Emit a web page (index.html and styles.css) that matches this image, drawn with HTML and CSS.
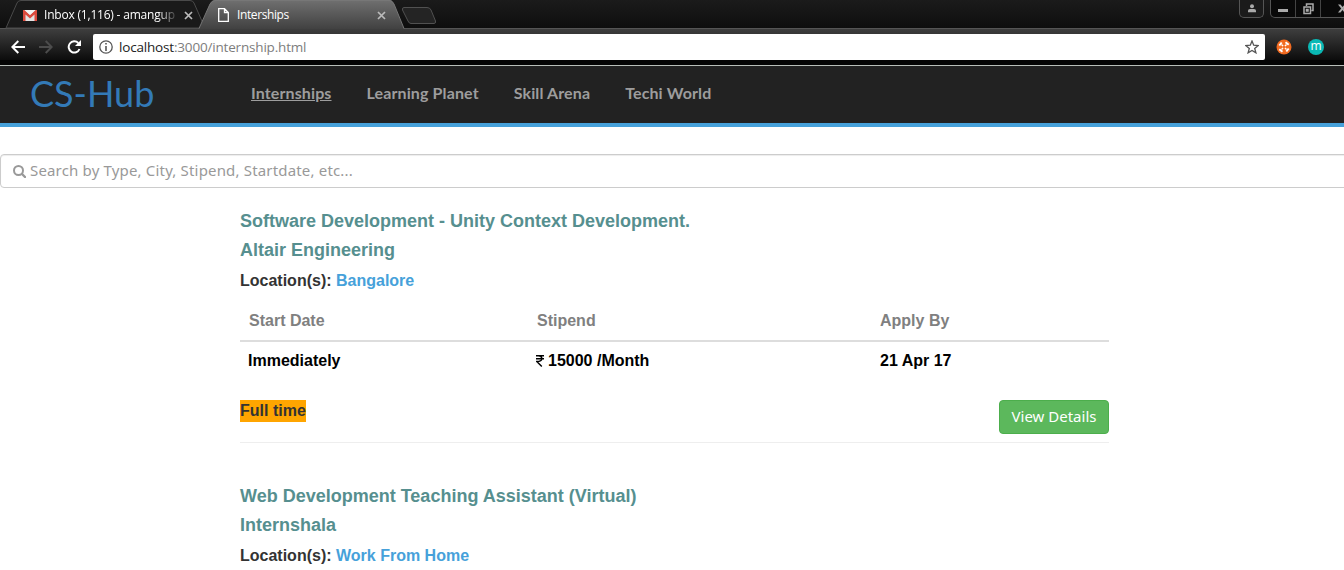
FILE: index.html
```html
<!DOCTYPE html>
<html lang="en">
<head>
<meta charset="utf-8">
<title>Interships</title>
<link rel="stylesheet" href="styles.css">
</head>
<body>
<header class="browser">
  <div class="tabstrip">
    <svg class="tab-shapes" width="450" height="29" viewBox="0 0 450 29">
      <defs>
        <linearGradient id="active" x1="0" y1="0" x2="0" y2="1"><stop offset="0" stop-color="#707070"/><stop offset="1" stop-color="#414141"/></linearGradient>
      </defs>
      <path d="M6 28L17 3Q18 .5 21 .5H190Q193 .5 194 3L205 28Z" fill="#1a1a1a" stroke="#4a4a4a"/>
      <path d="M199 29L210 4Q212 0 215 0H390Q392 0 394 4L404 29Z" fill="url(#active)"/>
      <path d="M199 28.5L210 4Q212 .5 215 .5H390Q392 .5 394 4L404 28.5" fill="none" stroke="#777"/>
      <path d="M404 7.500H427Q430 7.500 431 10L435.500 21Q436 23.500 434 23.500H411Q409 23.500 408 21L402.500 10Q402 7.500 404 7.500Z" fill="#242424" stroke="#515151"/>
    </svg>
    <div class="tab tab-first">
      <svg width="14" height="11" viewBox="0 0 14 11"><path d="M0 0H14V11H0Z" fill="#e4e4e4"/><path d="M0 11V0H1.500L7 5L12.500 0H14V11H11.500V4.500L7 8.500L2.500 4.500V11Z" fill="#dd4b3e"/><path d="M1.500 0H12.500L7 5Z" fill="#f5f5f5"/></svg>
      <span class="tab-title fade">Inbox (1,116) - amangup</span>
      <svg class="close" width="9" height="9" viewBox="0 0 9 9"><path d="M1 1L8 8M8 1L1 8"/></svg>
    </div>
    <div class="tab tab-active">
      <svg width="11" height="14" viewBox="0 0 11 14"><path d="M.7 .7H6.500L10.300 4.500V13.300H.7ZM6.500 .7V4.500H10.300" fill="none" stroke="#fff" stroke-width="1.300"/></svg>
      <span class="tab-title">Interships</span>
      <svg class="close" width="9" height="9" viewBox="0 0 9 9"><path d="M1 1L8 8M8 1L1 8"/></svg>
    </div>
    <div class="window-controls">
      <span class="control profile"><svg width="10" height="9" viewBox="0 0 10 9"><circle cx="5" cy="2.200" r="2" fill="#aaa"/><path d="M1 8.300V6.500Q1 5 3 5H7Q9 5 9 6.500V8.300Z" fill="#aaa"/></svg></span>
      <span class="control group">
        <span class="cell"><svg width="10" height="12" viewBox="0 0 10 12"><path d="M0 6H10V9H0Z" fill="#aaa"/></svg></span>
        <span class="cell"><svg width="11" height="12" viewBox="0 0 11 12"><path d="M3.500 3V1H10V7.500H8.500M1 4H7.500V10.500H1ZM3.500 6.500H5V8H3.500Z" fill="none" stroke="#aaa" stroke-width="1.500"/></svg></span>
        <span class="cell wide"><svg width="9" height="9" viewBox="0 0 9 9"><path d="M0 .5H2.500L4.500 3L6.500 .5H9L5.800 4.500L9 8.500H6.500L4.500 6L2.500 8.500H0L3.200 4.500Z" fill="#aaa"/></svg></span>
      </span>
    </div>
  </div>
  <div class="toolbar">
    <div class="nav-icons">
      <svg width="14" height="14" viewBox="0 0 14 14"><path d="M14 7H1.500M7.300 1L1.300 7L7.300 13" fill="none" stroke="#fff" stroke-width="2"/></svg>
      <svg width="14" height="14" viewBox="0 0 14 14"><path d="M0 7H12.500M6.700 1L12.700 7L6.700 13" fill="none" stroke="#4c4c4c" stroke-width="2"/></svg>
      <svg width="15" height="14" viewBox="0 0 15 14"><path d="M12.500 9A5.600 5.600 0 1 1 11.300 3" fill="none" stroke="#fff" stroke-width="2"/><path d="M14 0V6H8Z" fill="#fff"/></svg>
    </div>
    <div class="omnibox">
      <svg width="14" height="14" viewBox="0 0 14 14"><circle cx="7" cy="7" r="6.200" fill="none" stroke="#555" stroke-width="1.300"/><path d="M6.200 3H7.800V4.600H6.200ZM6.200 6H7.800V11H6.200Z" fill="#555"/></svg>
      <span class="url"><b>localhost</b>:3000/internship.html</span>
      <svg class="star" width="14" height="14" viewBox="0 0 14 14"><path d="M7 1L8.700 5.200L13.200 5.500L9.700 8.400L10.900 12.800L7 10.400L3.100 12.800L4.300 8.400L.8 5.500L5.300 5.200Z" fill="none" stroke="#555" stroke-width="1.300"/></svg>
    </div>
    <svg class="ext" width="16" height="16" viewBox="0 0 16 16"><circle cx="8" cy="8" r="7.500" fill="#f26b21"/><path d="M5.500 5.500L10.500 10.500M10.500 5.500L5.500 10.500" stroke="#fff" stroke-width="1.400"/><path d="M3.300 6.500L5.700 3.500M9.500 3.300L12.700 5.700M12.700 9.500L10.300 12.500M6.500 12.700L3.300 10.300" stroke="#fff" stroke-width="2"/><circle cx="8" cy="8" r="1.500" fill="#f26b21"/></svg>
    <span class="ext-m">m</span>
  </div>
</header>
<nav class="navbar">
  <a class="brand">CS-Hub</a>
  <a class="link current">Internships</a>
  <a class="link">Learning Planet</a>
  <a class="link">Skill Arena</a>
  <a class="link">Techi World</a>
</nav>
<div class="search">
  <svg width="13" height="13" viewBox="0 0 13 13"><circle cx="5.500" cy="5.500" r="4.500" fill="none" stroke="#999" stroke-width="2"/><path d="M9 9L12 12" stroke="#999" stroke-width="2.400" stroke-linecap="round"/></svg>
  <span class="placeholder">Search by Type, City, Stipend, Startdate, etc...</span>
</div>
<main class="listing">
  <section class="job">
    <h4 class="title">Software Development - Unity Context Development.</h4>
    <h4 class="title company">Altair Engineering</h4>
    <p class="location">Location(s): <a>Bangalore</a></p>
    <div class="row head"><span>Start Date</span><span>Stipend</span><span>Apply By</span></div>
    <div class="row values"><span>Immediately</span><span class="pay"><svg width="8" height="12" viewBox="0 0 8 12"><path d="M0 .8H8M0 3.800H8M.5 .8H2.500Q5.800 .8 5.800 3.800Q5.800 6.500 .8 6.500L5.800 11.500" fill="none" stroke="#000" stroke-width="1.400"/></svg>15000 /Month</span><span>21 Apr 17</span></div>
    <div class="footer"><span class="badge">Full time</span><button class="details">View Details</button></div>
  </section>
  <section class="job">
    <h4 class="title">Web Development Teaching Assistant (Virtual)</h4>
    <h4 class="title company">Internshala</h4>
    <p class="location">Location(s): <a>Work From Home</a></p>
  </section>
</main>
</body>
</html>
```
FILE: styles.css
```css
* { box-sizing: border-box; }
html, body { margin: 0; height: 570px; overflow: hidden; background: #fff; }
body { font-family: "Liberation Sans", Arial, sans-serif; color: #333; }
svg { display: block; flex: none; }

.browser { height: 66px; background: #050505; border-bottom: 1px solid #b9bfba; }
.tabstrip { position: relative; display: flex; height: 28px; background: linear-gradient(#1b1b1b, #0e0e0e); }
.tab-shapes { position: absolute; left: 0; top: 0; }
.tab { position: relative; display: flex; align-items: center; height: 30px; color: #fff; font: 12px "Open Sans", sans-serif; }
.tab-first { width: 205px; padding-left: 23px; gap: 7px; }
.tab-active { width: 200px; padding-left: 13px; gap: 8px; }
.tab-title { flex: none; width: 135px; white-space: nowrap; letter-spacing: -.4px; line-height: 16px; padding-bottom: 1px; }
.tab-first .tab-title { letter-spacing: -.2px; }
.tab-active .tab-title { width: 132px; }
.fade { -webkit-mask-image: linear-gradient(90deg, #000 84%, transparent); mask-image: linear-gradient(90deg, #000 84%, transparent); }
.close path { stroke: #bbb; stroke-width: 1.7; }
.tab-active .close { margin-left: 0; }
.tab-first .close { margin-left: -2px; }
.window-controls { display: flex; gap: 6px; margin-left: auto; margin-right: -21px; }
.control { display: flex; height: 18px; border: 1px solid #555; border-top: 0; border-radius: 0 0 5px 5px; background: #090909; }
.profile { width: 25px; justify-content: center; padding-top: 4px; background: #1b1b1b; }
.cell { display: flex; width: 25px; justify-content: center; padding-top: 3px; border-right: 1px solid #444; }
.cell.wide { width: 43px; padding-top: 4px; border: 0; }

.toolbar { display: flex; align-items: center; height: 32px; padding-left: 11px; background: linear-gradient(#3e3e3e, #0c0c0c); border-top: 1px solid #555; }
.nav-icons { display: flex; align-items: center; gap: 14px; width: 82px; padding-top: 5px; }
.omnibox { display: flex; align-items: center; align-self: flex-end; width: 1172px; height: 26px; padding: 0 6px; border-radius: 2px; background: #fff; }
.url { margin-left: 6px; padding-bottom: 1px; color: #7d7d7d; font: 13.5px "Open Sans", sans-serif; letter-spacing: -.18px; }
.url b { color: #222; font-weight: 400; }
.star { margin-left: auto; }
.ext { margin: 5px 16px 0 11px; }
.ext-m { width: 16px; height: 16px; margin-top: 5px; border-radius: 50%; background: #0ab9b5; color: #fff; font: 12px/14px "Open Sans", sans-serif; text-align: center; }

.navbar { display: flex; align-items: center; height: 61px; padding-left: 30px; background: #222; border-bottom: 4px solid #46a1da; font-family: Lato, sans-serif; }
.brand { width: 221px; margin-top: -3px; color: #337ab7; font-size: 36px; line-height: 54px; }
.link { margin-right: 35px; padding-bottom: 5px; color: #9d9d9d; font-size: 16px; font-weight: 700; white-space: nowrap; letter-spacing: .12px; }
.current { text-decoration: underline; }

.search { display: flex; align-items: center; gap: 4px; width: 1364px; height: 34px; margin-top: 27px; padding-left: 12px; border: 1px solid #ccc; border-radius: 4px; box-shadow: inset 0 1px 1px rgba(0,0,0,.075); color: #999; font: 15px "Noto Sans", sans-serif; }
.placeholder { padding-bottom: 2px; letter-spacing: .17px; }

.listing { width: 869px; margin-left: 240px; padding-top: 23px; font-size: 16px; font-weight: 700; }
.title { width: max-content; margin: 0; color: #568f8f; font-size: 18px; line-height: 20px; }
.company { margin-top: 9px; }
.location { margin: 9px 0 0; line-height: 23px; }
.location a { color: #46a1da; }
.row { display: grid; grid-template-columns: 288px 343px 1fr; padding-left: 9px; line-height: 23px; }
.head { height: 50px; padding-top: 17px; border-bottom: 2px solid #ddd; color: #808080; }
.values { align-items: start; height: 58px; padding: 7px 0 0 8px; color: #000; }
.values span:last-child { padding-left: 1px; }
.pay { display: flex; align-items: center; gap: 4px; }
.footer { display: flex; justify-content: space-between; align-items: flex-start; height: 43px; margin-bottom: 43px; border-bottom: 1px solid #eee; }
.badge { height: 22px; line-height: 22px; background: orange; }
.details { width: 110px; height: 34px; padding: 0 0 2px; border: 1px solid #4cae4c; border-radius: 4px; background: #5cb85c; color: #fff; font: 15px/20px "Noto Sans", sans-serif; }
```
